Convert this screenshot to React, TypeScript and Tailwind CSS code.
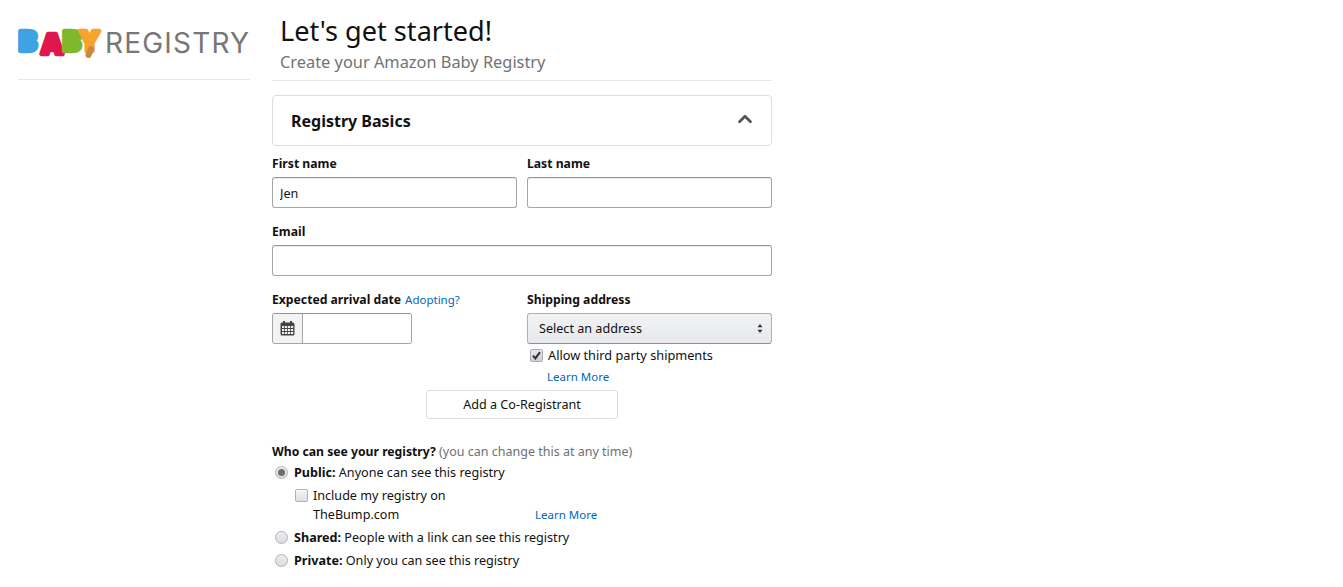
import { ChevronUp } from "lucide-react";

const labelClass = "block h-[18px] text-[12.2px] font-bold leading-[20px] text-[#111]";
const inputClass =
  "block h-[31px] w-full rounded-[3px] border border-[#a6a6a6] border-t-[#949494] bg-white px-[7px] pt-[2px] text-[12.6px] text-[#111] outline-none shadow-[inset_0_1px_0_rgba(0,0,0,0.07)]";
const linkClass = "text-[11.5px] leading-[18px] text-[#0066c0]";
const rowTextClass = "pt-[2px] leading-[18px]";

function Logo() {
  const letterClass = "text-[29px] font-extrabold [font-family:'Open_Sans',sans-serif] [paint-order:stroke]";
  return (
    <div className="flex h-[80px] items-start border-b border-[#e7e7e7]">
      <div className="mt-[24px] flex h-[36px] items-center">
        <svg width="84" height="36" viewBox="0 0 84 36" className="shrink-0 overflow-visible">
          <g strokeWidth="4.5" strokeLinejoin="round">
            <text x="0" y="27" fill="#3fa3e3" stroke="#3fa3e3" className={letterClass}>B</text>
            <text x="23.5" y="30" fill="#e0174f" stroke="#e0174f" className={letterClass}>A</text>
            <text x="44" y="27" fill="#7fb82c" stroke="#7fb82c" className={letterClass}>B</text>
            <text x="62" y="27" fill="#f5a42c" stroke="#f5a42c" className={letterClass}>Y</text>
          </g>
          <path d="M73 25 L70.5 31" stroke="#c98a3e" strokeWidth="6" strokeLinecap="round" />
        </svg>
        <span className="ml-[3px] pt-[1px] text-[28px] font-normal leading-[36px] tracking-[1.2px] text-[#777777] [font-family:'Inter',sans-serif]">
          REGISTRY
        </span>
      </div>
    </div>
  );
}

function Checkbox({ checked }: { checked?: boolean }) {
  return (
    <span
      className={
        checked
          ? "flex h-[13px] w-[13px] shrink-0 items-center justify-center rounded-[2px] border border-[#a9acb1] bg-gradient-to-b from-[#e6e7e9] to-[#d0d2d5]"
          : "flex h-[13px] w-[13px] shrink-0 items-center justify-center rounded-[2px] border border-[#adb1b8] bg-gradient-to-b from-[#f2f3f5] to-[#dfe1e4] shadow-[inset_0_1px_0_#fff]"
      }
    >
      {checked ? (
        <svg width="9" height="9" viewBox="0 0 9 9">
          <path d="M1 4.6 L3.4 7.4 L8 1.2" fill="none" stroke="#333" strokeWidth="2.1" />
        </svg>
      ) : null}
    </span>
  );
}

function Radio({ checked }: { checked?: boolean }) {
  return (
    <span className="flex h-[13px] w-[13px] shrink-0 items-center justify-center rounded-full border border-[#adb1b8] bg-gradient-to-b from-[#eceef0] to-[#d9dbde]">
      {checked ? <span className="h-[7px] w-[7px] rounded-full bg-[#6d6d6d]" /> : null}
    </span>
  );
}

function CalendarIcon() {
  return (
    <svg width="15" height="15" viewBox="0 0 15 15">
      <rect x="0.5" y="1.5" width="14" height="13" rx="1.5" fill="#444" />
      <rect x="3" y="0" width="2" height="3" fill="#444" />
      <rect x="10" y="0" width="2" height="3" fill="#444" />
      <g fill="#f3f3f3">
        <rect x="2" y="5" width="2.2" height="2" />
        <rect x="5" y="5" width="2.2" height="2" />
        <rect x="8" y="5" width="2.2" height="2" />
        <rect x="11" y="5" width="2.2" height="2" />
        <rect x="2" y="8" width="2.2" height="2" />
        <rect x="5" y="8" width="2.2" height="2" />
        <rect x="8" y="8" width="2.2" height="2" />
        <rect x="11" y="8" width="2.2" height="2" />
        <rect x="2" y="11" width="2.2" height="2" />
        <rect x="5" y="11" width="2.2" height="2" />
        <rect x="8" y="11" width="2.2" height="2" />
        <rect x="11" y="11" width="2.2" height="2" />
      </g>
    </svg>
  );
}

export default function App() {
  return (
    <div className="flex h-[587px] w-[1343px] items-start overflow-hidden bg-white pl-[18px] text-[12.6px] text-[#111] [font-family:'Noto_Sans',sans-serif]">
      <div className="w-[232px]">
        <Logo />
      </div>

      <div className="ml-[22px] w-[500px]">
        <div className="h-[81px] border-b border-[#e7e7e7] pl-[8px] pt-[11px]">
          <h1 className="text-[27.1px] leading-[40px] font-normal text-[#111]">Let's get started!</h1>
          <p className="text-[16.37px] leading-[22px] text-[#6f7373]">Create your Amazon Baby Registry</p>
        </div>

        <div className="mt-[14px] flex h-[51px] items-center justify-between rounded-[4px] border border-[#ddd] pl-[18px] pr-[15px]">
          <h2 className="text-[16px] font-bold leading-[22px] text-[#111]">Registry Basics</h2>
          <ChevronUp size={22} strokeWidth={3} className="mb-[3px] text-[#555]" />
        </div>

        <div className="mt-[8px] grid grid-cols-2 gap-x-[10px]">
          <div>
            <label className={labelClass}>First name</label>
            <input className={`${inputClass} mt-[5px]`} defaultValue="Jen" />
          </div>
          <div>
            <label className={labelClass}>Last name</label>
            <input className={`${inputClass} mt-[5px]`} />
          </div>
        </div>

        <div className="mt-[14px]">
          <label className={labelClass}>Email</label>
          <input className={`${inputClass} mt-[5px]`} />
        </div>

        <div className="mt-[14px] grid grid-cols-2 gap-x-[10px]">
          <div>
            <div className="flex h-[18px] items-start gap-[4px]">
              <label className={labelClass}>Expected arrival date</label>
              <a className={`${linkClass} pt-[1px]`}>Adopting?</a>
            </div>
            <div className="mt-[5px] flex h-[31px] w-[140px] overflow-hidden rounded-[3px] border border-[#a6a6a6] border-t-[#949494]">
              <span className="flex w-[30px] items-center justify-center border-r border-[#a6a6a6] bg-[#f3f3f3]">
                <CalendarIcon />
              </span>
              <input className="min-w-0 flex-1 bg-white outline-none" />
            </div>
          </div>
          <div>
            <label className={labelClass}>Shipping address</label>
            <div className="mt-[5px] flex h-[31px] items-center justify-between rounded-[3px] border border-[#adb1b8] border-b-[#8d9096] bg-gradient-to-b from-[#f1f2f4] to-[#e7e9ec] pl-[11px] pr-[8px] text-[12.6px] text-[#111]">
              <span className="pt-[2px]">Select an address</span>
              <svg width="6" height="9" viewBox="0 0 6 9">
                <path d="M3 0 L5.5 3.2 H0.5 Z M3 9 L5.5 5.8 H0.5 Z" fill="#333" />
              </svg>
            </div>
            <div className="ml-[3px] mt-[2px] flex h-[18px] items-center gap-[5px]">
              <Checkbox checked />
              <span className="text-[12.75px] leading-[18px]">Allow third party shipments</span>
            </div>
            <a className={`${linkClass} ml-[20px] mt-[4px] block`}>Learn More</a>
          </div>
        </div>

        <div className="mt-[4px] flex justify-center">
          <button className="flex h-[29px] w-[192px] items-center justify-center rounded-[3px] border border-[#ddd] bg-white pt-[2px] text-[12.6px] text-[#111]">
            Add a Co-Registrant
          </button>
        </div>

        <p className="mt-[23px] h-[18px] leading-[20px]">
          <span className="text-[12.2px] font-bold">Who can see your registry?</span>{" "}
          <span className="text-[12.5px] text-[#6f6f6f]">(you can change this at any time)</span>
        </p>

        <div className="ml-[3px] mt-[3px] flex h-[18px] items-center gap-[6px]">
          <Radio checked />
          <span className={rowTextClass}>
            <b>Public:</b> Anyone can see this registry
          </span>
        </div>

        <div className="ml-[23px] mt-[5px] flex items-end">
          <div className="w-[240px]">
            <div className="flex h-[18px] items-center gap-[5px]">
              <Checkbox />
              <span className={rowTextClass}>Include my registry on</span>
            </div>
            <div className="mt-[1px] h-[18px] pl-[18px] leading-[20px]">TheBump.com</div>
          </div>
          <a className={`${linkClass} h-[18px] leading-[20px]`}>Learn More</a>
        </div>

        <div className="ml-[3px] mt-[5px] flex h-[18px] items-center gap-[6px]">
          <Radio />
          <span className={rowTextClass}>
            <b>Shared:</b> People with a link can see this registry
          </span>
        </div>

        <div className="ml-[3px] mt-[5px] flex h-[18px] items-center gap-[6px]">
          <Radio />
          <span className={rowTextClass}>
            <b>Private:</b> Only you can see this registry
          </span>
        </div>
      </div>
    </div>
  );
}
